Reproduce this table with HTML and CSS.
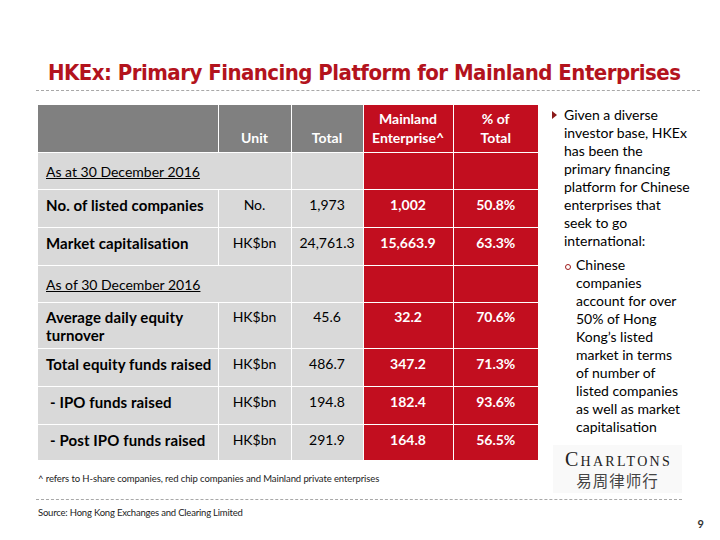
FILE: index.html
```html
<!DOCTYPE html>
<html>
<head>
<meta charset="utf-8">
<link rel="stylesheet" href="styles.css">
</head>
<body>
<div class="slide">
  <h1 class="title">HKEx: Primary Financing Platform for Mainland Enterprises</h1>
  <div class="rule"></div>
  <div class="main">
    <table class="data">
      <colgroup>
        <col class="c1"><col class="c2"><col class="c3"><col class="c4"><col class="c5">
      </colgroup>
      <tr class="head">
        <th class="g"></th>
        <th class="g">Unit</th>
        <th class="g">Total</th>
        <th class="r">Mainland<br>Enterprise^</th>
        <th class="r">% of<br>Total</th>
      </tr>
      <tr class="sec h37">
        <td class="lbl" colspan="2"><u>As at 30 December 2016</u></td>
        <td></td><td class="r"></td><td class="r"></td>
      </tr>
      <tr class="h38">
        <td class="lbl b">No. of listed companies</td><td>No.</td><td>1,973</td><td class="r">1,002</td><td class="r">50.8%</td>
      </tr>
      <tr class="h38">
        <td class="lbl b">Market capitalisation</td><td>HK$bn</td><td>24,761.3</td><td class="r">15,663.9</td><td class="r">63.3%</td>
      </tr>
      <tr class="sec h37">
        <td class="lbl" colspan="2"><u>As of 30 December 2016</u></td>
        <td></td><td class="r"></td><td class="r"></td>
      </tr>
      <tr class="h46">
        <td class="lbl b">Average daily equity turnover</td><td>HK$bn</td><td>45.6</td><td class="r">32.2</td><td class="r">70.6%</td>
      </tr>
      <tr class="h38">
        <td class="lbl b">Total equity funds raised</td><td>HK$bn</td><td>486.7</td><td class="r">347.2</td><td class="r">71.3%</td>
      </tr>
      <tr class="h38">
        <td class="lbl b ind">- IPO funds raised</td><td>HK$bn</td><td>194.8</td><td class="r">182.4</td><td class="r">93.6%</td>
      </tr>
      <tr class="h36">
        <td class="lbl b ind">- Post IPO funds raised</td><td>HK$bn</td><td>291.9</td><td class="r">164.8</td><td class="r">56.5%</td>
      </tr>
    </table>
    <div class="side">
      <div class="bullet">
        <span class="tri"></span>
        <p>Given a diverse investor base, HKEx has been the primary financing platform for Chinese enterprises that seek to go international:</p>
      </div>
      <div class="sub">
        <span class="ring"></span>
        <p>Chinese companies account for over 50% of Hong Kong’s listed market in terms of number of listed companies as well as market capitalisation</p>
      </div>
    </div>
  </div>
  <div class="foot">
    <div class="notes">
      <p class="note">^ refers to H-share companies, red chip companies and Mainland private enterprises</p>
    </div>
    <div class="logo">
      <div class="brand">Charltons</div>
      <div class="cn">易周律师行</div>
    </div>
  </div>
  <div class="rule2"></div>
  <div class="bottom">
    <p class="src">Source: Hong Kong Exchanges and Clearing Limited</p>
    <span class="page">9</span>
  </div>
</div>
</body>
</html>
```
FILE: styles.css
```css
html, body { margin: 0; padding: 0; background: #fff; }
.slide { width: 720px; height: 540px; position: relative; overflow: hidden; font-family: Lato, "Open Sans", sans-serif; color: #000; }
.title { margin: 0; padding: 60px 0 0 48px; font-family: "DejaVu Sans", sans-serif; font-stretch: condensed; font-weight: bold; font-size: 22px; letter-spacing: -0.53px; color: #b3131d; line-height: 26px; height: 26px; white-space: nowrap; }
.rule { margin: 4px 20px 0 36px; border-top: 1px dashed #a8a8a8; }
.main { display: flex; padding: 14px 0 0 38px; gap: 12px; }
.data { border-collapse: collapse; table-layout: fixed; width: 500px; font-size: 14px; flex: none; }
col.c1 { width: 180px; } col.c2 { width: 73px; } col.c3 { width: 72px; } col.c4 { width: 90px; } col.c5 { width: 85px; }
.data th, .data td { padding: 0; border: 1px solid #fff; text-align: center; }
.data tr > :first-child { border-left: 0; }
.data tr > :last-child { border-right: 0; }
.data tr:first-child > * { border-top: 0; }
.data tr:last-child > * { border-bottom: 0; }
.head th { height: 47px; vertical-align: bottom; padding-bottom: 5px; color: #fff; font-weight: bold; line-height: 19px; box-sizing: border-box; }
.head th.g { background: #808080; }
.data td { background: #d9d9d9; vertical-align: top; padding-top: 6px; line-height: 18px; box-sizing: border-box; }
.data .r { background: #c20e1f; color: #fff; font-weight: bold; }
.data td.lbl { text-align: left; padding-left: 8px; }
.data td.b { font-weight: bold; font-size: 15px; letter-spacing: 0.1px; }
.data td.ind { padding-left: 12px; }
.sec td { padding-top: 10px; }
.h37 td { height: 37px; } .h38 td { height: 38px; } .h46 td { height: 46px; padding-top: 5px; } .h36 td { height: 36px; }
.side { width: 140px; font-size: 14px; line-height: 18px; }
.side p { margin: 0; }
.bullet { display: flex; gap: 7px; padding-top: 1px; }
.bullet p { width: 128px; }
.tri { width: 0; height: 0; border-top: 4px solid transparent; border-bottom: 4px solid transparent; border-left: 5px solid #8b1a1a; margin: 5px 0 0 2px; flex: none; }
.sub { display: flex; gap: 5px; margin-top: 6px; padding-left: 15px; }
.sub p { width: 110px; }
.ring { width: 4px; height: 4px; border: 1.5px solid #a01c1c; border-radius: 50%; margin-top: 8px; flex: none; }
.foot { display: flex; justify-content: space-between; align-items: flex-start; padding: 0 38px 0 38px; height: 39px; }
.notes { padding-top: 13px; }
.note { margin: 0; font-size: 9.5px; color: #222; letter-spacing: -0.1px; }
.logo { width: 129px; margin-top: -15px; padding: 4px 0 2px; background: #f9f9f9; text-align: center; }
.brand { font-family: "Liberation Serif", serif; font-variant: small-caps; font-size: 20px; letter-spacing: 2.3px; color: #222; line-height: 21px; padding-left: 2px; }
.cn { font-family: "Noto Sans CJK SC", sans-serif; font-size: 15.5px; color: #444; line-height: 21px; letter-spacing: 1px; }
.rule2 { margin: 0 38px 0 36px; border-top: 1px dashed #a8a8a8; }
.bottom { display: flex; justify-content: space-between; padding: 7px 16px 0 38px; }
.src { margin: 0; font-size: 9.5px; color: #222; letter-spacing: -0.2px; }
.page { font-size: 11px; font-weight: bold; color: #333; margin-top: 10px; }
```
